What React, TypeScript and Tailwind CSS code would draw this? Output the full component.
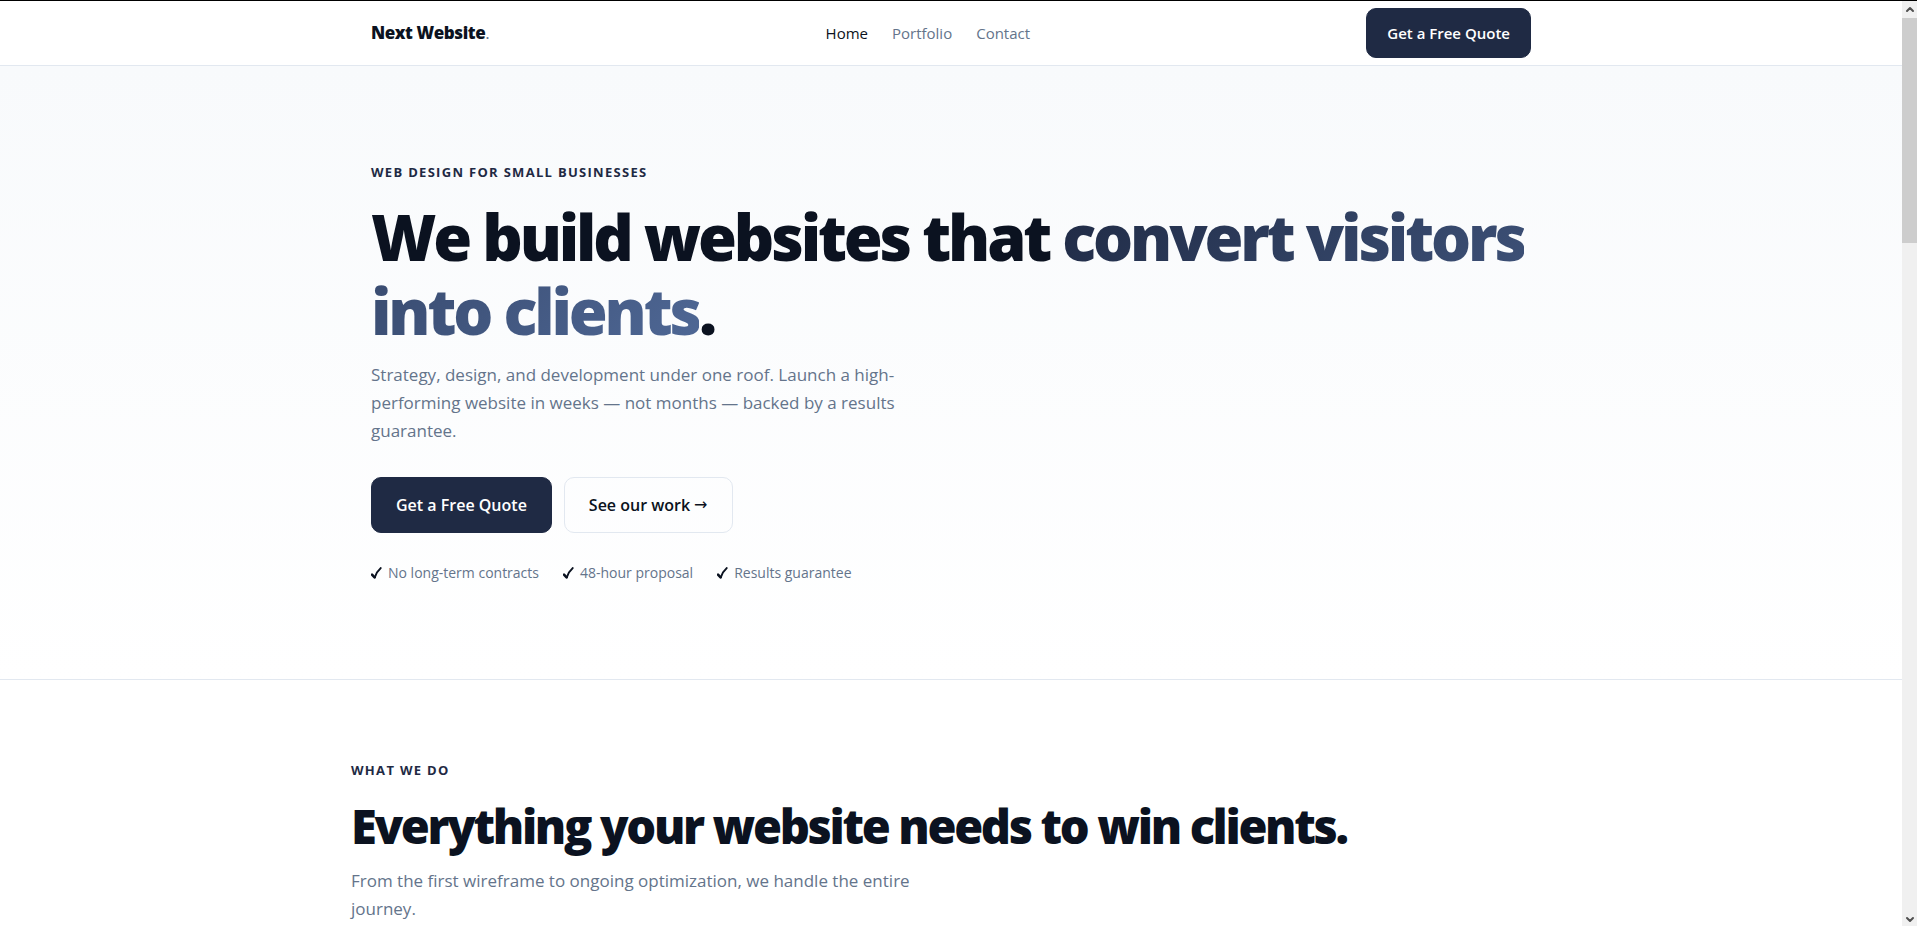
import type { ReactNode } from "react";
import { ChevronDown, ChevronUp } from "lucide-react";

const navLinks = [
  { label: "Home", href: "#home", active: true },
  { label: "Portfolio", href: "#portfolio", active: false },
  { label: "Contact", href: "#contact", active: false },
];

const promises = ["No long-term contracts", "48-hour proposal", "Results guarantee"];

function Eyebrow({ children }: { children: ReactNode }) {
  return (
    <p className="text-[13px] leading-[21px] font-bold tracking-widest text-[#1f2a44] uppercase">
      {children}
    </p>
  );
}

function Tick() {
  return (
    <svg viewBox="0 0 11 12" className="h-3 w-[11px]" fill="none" stroke="currentColor" aria-hidden="true">
      <path d="M1 7.6 L3.6 10.4" strokeWidth="2.6" strokeLinecap="round" />
      <path d="M3.8 10.4 C5 6.8 7 3.4 9.8 1" strokeWidth="1.8" strokeLinecap="round" />
    </svg>
  );
}

function Header() {
  return (
    <header className="border-b border-[#e2e8f0] bg-white">
      <div className="mx-auto flex h-16 max-w-[1200px] items-center justify-between px-5">
        <a href="#home" className="text-[17px] font-extrabold tracking-tight text-[#0b1220]">
          Next Website<span className="font-normal text-[#64748b]">.</span>
        </a>
        <nav aria-label="Main" className="flex items-center gap-6 text-[15px]">
          {navLinks.map((link) => (
            <a
              key={link.label}
              href={link.href}
              aria-current={link.active ? "page" : undefined}
              className={link.active ? "text-[#0b1220]" : "text-[#64748b]"}
            >
              {link.label}
            </a>
          ))}
        </nav>
        <a
          href="#quote"
          className="flex h-[50px] items-center rounded-[10px] border border-[#1f2a44] bg-[#1f2a44] px-5 text-[15px] font-semibold text-white"
        >
          Get a Free Quote
        </a>
      </div>
    </header>
  );
}

function Hero() {
  return (
    <section className="border-b border-[#e2e8f0] bg-linear-to-b from-[#f8fafc] to-white">
      <div className="mx-auto max-w-[1200px] px-5 py-24">
        <Eyebrow>Web design for small businesses</Eyebrow>
        <h1 className="mt-[17px] text-[63px] leading-[74px] font-extrabold tracking-tighter text-[#0b1220]">
          We build websites that{" "}
          <span className="bg-linear-[135deg] from-[#1f2a44] to-[#4f6896] bg-clip-text text-transparent">
            convert visitors into clients
          </span>
          .
        </h1>
        <p className="mt-[13px] max-w-[560px] text-[17px] leading-7 text-[#64748b]">
          Strategy, design, and development under one roof. Launch a high-performing website in
          weeks — not months — backed by a results guarantee.
        </p>
        <div className="mt-8 flex gap-3 text-base font-semibold">
          <a
            href="#quote"
            className="flex h-14 items-center rounded-[10px] border border-[#1f2a44] bg-[#1f2a44] px-6 text-white"
          >
            Get a Free Quote
          </a>
          <a
            href="#portfolio"
            className="flex h-14 items-center gap-1 rounded-[10px] border border-[#e2e8f0] px-6 text-[#0b1220]"
          >
            See our work <span className="font-['DejaVu_Sans'] font-normal">→</span>
          </a>
        </div>
        <ul className="mt-[30px] flex gap-6 text-[14px] leading-5 text-[#64748b]">
          {promises.map((promise) => (
            <li key={promise} className="flex items-center gap-1.5">
              <span className="text-[#0b1220]">
                <Tick />
              </span>
              {promise}
            </li>
          ))}
        </ul>
      </div>
    </section>
  );
}

function Services() {
  return (
    <section className="mx-auto max-w-[1200px] py-20">
      <Eyebrow>What we do</Eyebrow>
      <h2 className="mt-[17px] text-[47px] leading-[56px] font-extrabold tracking-tighter text-[#0b1220]">
        Everything your website needs to win clients.
      </h2>
      <p className="mt-[13px] max-w-[580px] text-[17px] leading-7 text-[#64748b]">
        From the first wireframe to ongoing optimization, we handle the entire journey.
      </p>
    </section>
  );
}

function ScrollBar() {
  return (
    <div aria-hidden="true" className="flex w-[15px] shrink-0 flex-col items-center bg-[#f0f0f0] text-[#505050]">
      <ChevronUp className="h-[17px] w-3" strokeWidth={4} />
      <div className="h-[225px] w-full bg-[#cdcdcd]" />
      <ChevronDown className="mt-auto h-[13px] w-3" strokeWidth={4} />
    </div>
  );
}

export default function App() {
  return (
    <div className="flex h-screen border-t border-black bg-white font-['Open_Sans','Noto_Sans',sans-serif]">
      <main className="min-w-0 flex-1 overflow-hidden">
        <Header />
        <Hero />
        <Services />
      </main>
      <ScrollBar />
    </div>
  );
}
